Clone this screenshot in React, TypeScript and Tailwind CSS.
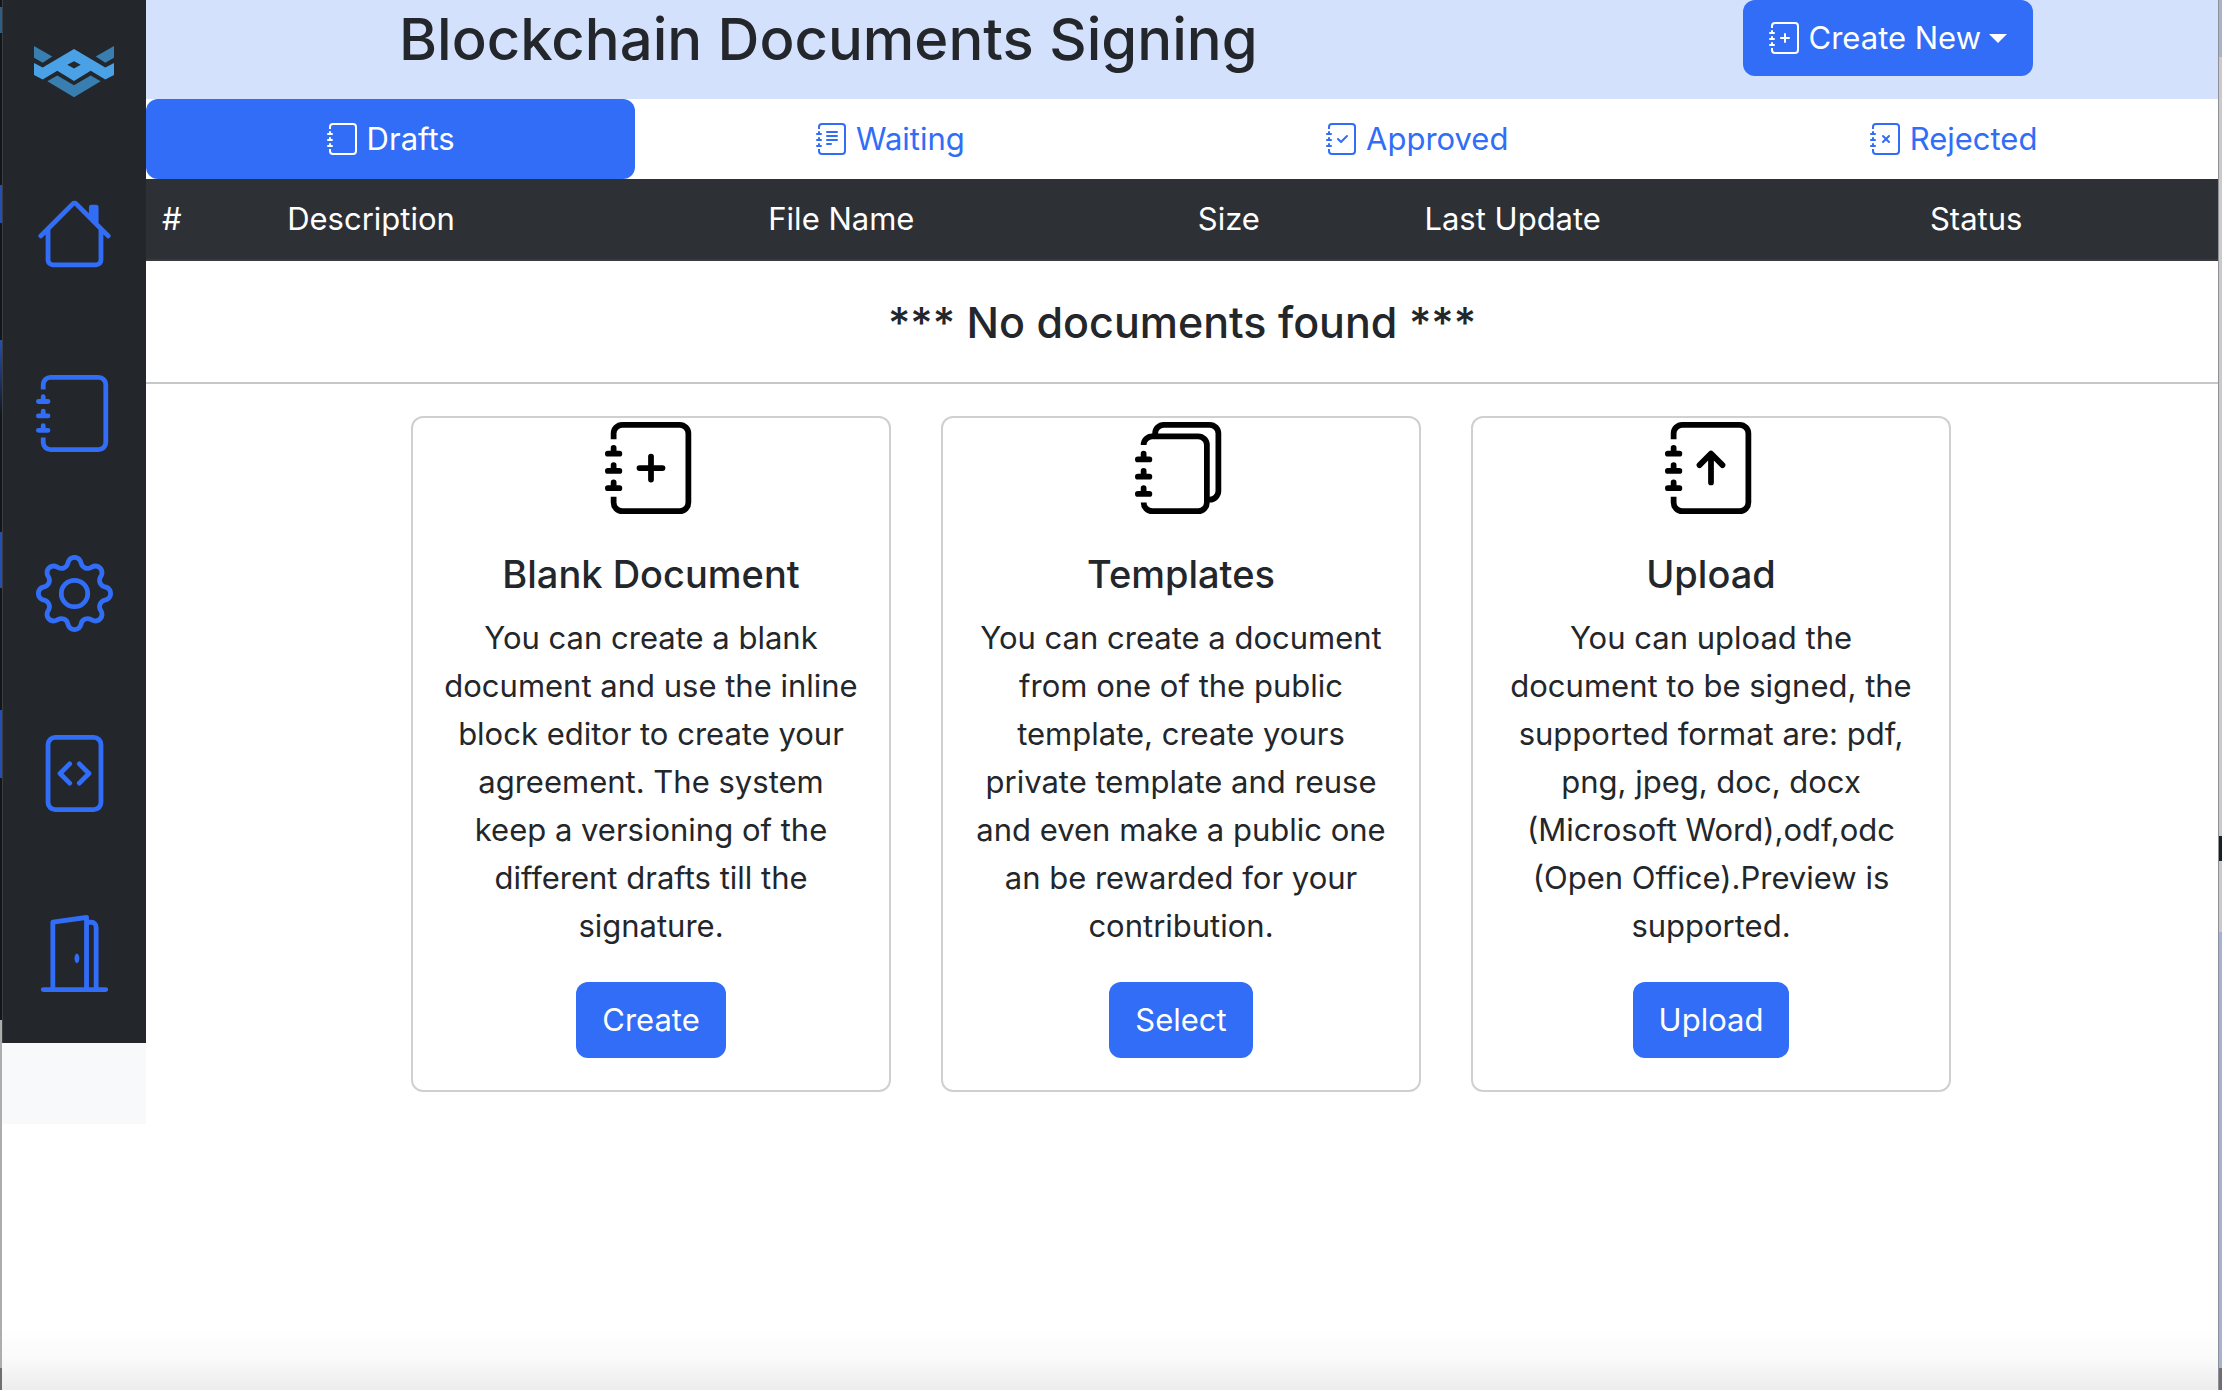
import type { ComponentType, ReactNode } from "react";
import {
  BsDoorOpen,
  BsFileCode,
  BsGear,
  BsHouse,
  BsJournal,
  BsJournalArrowUp,
  BsJournalCheck,
  BsJournalPlus,
  BsJournals,
  BsJournalText,
  BsJournalX,
} from "react-icons/bs";

type Icon = ComponentType<{ className?: string }>;

const navItems: { label: string; icon: Icon }[] = [
  { label: "Home", icon: BsHouse },
  { label: "Documents", icon: BsJournal },
  { label: "Settings", icon: BsGear },
  { label: "Developers", icon: BsFileCode },
  { label: "Sign out", icon: BsDoorOpen },
];

const tabs: { label: string; icon: Icon }[] = [
  { label: "Drafts", icon: BsJournal },
  { label: "Waiting", icon: BsJournalText },
  { label: "Approved", icon: BsJournalCheck },
  { label: "Rejected", icon: BsJournalX },
];

const cards: { title: string; text: string; action: string; icon: Icon }[] = [
  {
    title: "Blank Document",
    text: "You can create a blank document and use the inline block editor to create your agreement. The system keep a versioning of the different drafts till the signature.",
    action: "Create",
    icon: BsJournalPlus,
  },
  {
    title: "Templates",
    text: "You can create a document from one of the public template, create yours private template and reuse and even make a public one an be rewarded for your contribution.",
    action: "Select",
    icon: BsJournals,
  },
  {
    title: "Upload",
    text: "You can upload the document to be signed, the supported format are: pdf, png, jpeg, doc, docx (Microsoft Word),odf,odc (Open Office).Preview is supported.",
    action: "Upload",
    icon: BsJournalArrowUp,
  },
];

function Logo() {
  return (
    <svg viewBox="0 0 80 52" className="h-[52px] w-20" aria-hidden="true">
      <path fill="#387eb0" d="M0 0 18.3 10.5 8.7 16.7 0 11.7ZM80 0 61.7 10.5 71.3 16.7 80 11.7Z" />
      <path
        fill="#4aa1e6"
        fillRule="evenodd"
        d="M40 3 71.3 21.5 80 17V29L71.3 33.5 56.7 24.7 40 35 23.3 24.7 8.7 33.5 0 29V17L8.7 21.5ZM40 15.2 33.3 18.7 40 22.5 46.7 18.7Z"
      />
      <path fill="#387eb0" d="M23.3 29.5 40 39.3 56.7 29.5 66.7 35.3 40 51.3 13.3 35.3Z" />
    </svg>
  );
}

function PrimaryButton({ children }: { children: ReactNode }) {
  return (
    <button type="button" className="inline-flex h-[76px] items-center rounded-xl bg-[#316df6] px-[26px] text-white">
      {children}
    </button>
  );
}

function Sidebar() {
  return (
    <aside className="w-36 shrink-0 self-start bg-[#f8f9fb] pb-[81px]">
      <nav aria-label="Main" className="bg-[#23262a] shadow-[inset_1px_0_#3b3e42]">
        <a href="#top" aria-label="Start" className="flex h-[143px] items-center justify-center">
          <Logo />
        </a>
        {navItems.map(({ label, icon: ItemIcon }) => (
          <a key={label} href="#top" aria-label={label} className="flex h-[180px] items-center justify-center text-[#316df6]">
            <ItemIcon className="size-[77px]" />
          </a>
        ))}
      </nav>
    </aside>
  );
}

export default function App() {
  return (
    <div className="flex min-h-screen bg-white font-['Inter',sans-serif] text-[31px] leading-[48px] text-[#23262a]">
      <div className="w-0.5 shrink-0 bg-[linear-gradient(#14171a_7px,#2c5f85_7px,#2c5f85_33px,#14171a_33px,#14171a_185px,#2450b5_185px,#2450b5_223px,#14171a_223px,#14171a_340px,#2450b5_340px,#14171a_415px,#14171a_532px,#2450b5_532px,#2450b5_588px,#14171a_588px,#14171a_710px,#2450b5_710px,#2450b5_778px,#14171a_778px,#14171a_1020px,#adadad_1020px,#adadad_1368px,#6e6e6e_1368px)]" />
      <div className="flex min-w-0 flex-1 flex-col">
        <div className="flex">
          <Sidebar />
          <main className="flex min-w-0 flex-1 flex-col">
            <header className="flex h-[99px] items-start justify-between bg-[#d4e1fc] pr-[185px] pl-[253px]">
              <h1 className="text-[58px] leading-[78px] font-medium">Blockchain Documents Signing</h1>
              <PrimaryButton>
                <BsJournalPlus className="mr-2 size-8" />
                Create New
                <span className="ml-2 border-x-[9px] border-t-[9px] border-x-transparent border-t-white" />
              </PrimaryButton>
            </header>

            <div role="tablist" className="flex">
              {tabs.map(({ label, icon: TabIcon }, i) => (
                <button
                  key={label}
                  type="button"
                  role="tab"
                  aria-selected={i === 0}
                  className="flex flex-auto items-center justify-center gap-2 rounded-xl px-9 py-4 text-[#316df6] aria-selected:bg-[#316df6] aria-selected:text-white"
                >
                  <TabIcon className="size-8" />
                  {label}
                </button>
              ))}
            </div>

            <table className="w-full table-fixed border-collapse">
              <thead>
                <tr className="h-[81px] border-b-2 border-[#373b3e] bg-[#2d3035] text-white">
                  <th className="w-20 px-4 text-left font-normal">#</th>
                  <th className="w-[14%] font-normal">Description</th>
                  <th className="w-[31.4%] font-normal">File Name</th>
                  <th className="w-[6%] font-normal">Size</th>
                  <th className="w-[21.4%] font-normal">Last Update</th>
                  <th className="font-normal">Status</th>
                </tr>
              </thead>
              <tbody>
                <tr className="border-b-2 border-[#c6c7c8]">
                  <td colSpan={6} className="h-[123px] text-center text-[43px] font-medium">
                    *** No documents found ***
                  </td>
                </tr>
              </tbody>
            </table>

            <div className="flex justify-center gap-[50px] pt-8 pr-0.5">
              {cards.map(({ title, text, action, icon: CardIcon }) => (
                <section key={title} className="w-[480px] rounded-xl border-2 border-[#cfd0d1] text-center">
                  <CardIcon className="mx-auto my-1 size-[92px] text-black" />
                  <div className="px-7 py-8">
                    <h2 className="mb-4 text-[38px] font-medium">{title}</h2>
                    <p className="mb-8">{text}</p>
                    <PrimaryButton>{action}</PrimaryButton>
                  </div>
                </section>
              ))}
            </div>
          </main>
        </div>
        <div className="mt-auto h-16 bg-linear-to-b from-white via-[#fafafa] to-[#ececec]" />
      </div>
      <div className="w-1 shrink-0 border-l border-[#8e9199] bg-[linear-gradient(#a9b4cc_57px,#cbcac9_57px,#cbcac9_836px,#1c1f22_836px,#1c1f22_861px,#cbcac9_861px,#cbcac9_932px,#a6b3d0_932px,#a6b3d0_1368px,#6e6e6e_1368px)]" />
    </div>
  );
}
